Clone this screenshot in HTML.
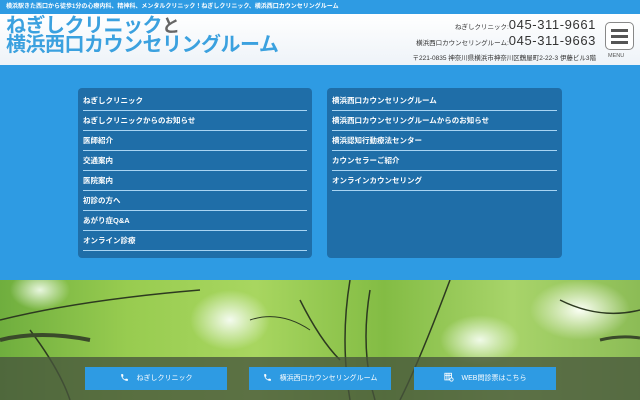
<!DOCTYPE html>
<html><head><meta charset="utf-8"><style>
*{margin:0;padding:0;box-sizing:border-box}
body{width:640px;height:400px;overflow:hidden;background:#2e9be3;font-family:"Liberation Sans","Noto Sans CJK JP",sans-serif;position:relative}
.top{position:absolute;left:0;top:0;width:640px;height:14px;background:#2e9be3;color:#fff;font-size:6px;font-weight:bold;line-height:14px;padding-left:6px;white-space:nowrap}
.hd{position:absolute;left:0;top:14px;width:640px;height:51px;background:linear-gradient(#fff,#eef3f8)}
.logo{position:absolute;left:6px;top:3px;font-size:20px;font-weight:bold;color:#3ba1df;line-height:19px;letter-spacing:-0.5px}
.logo span{color:#666;font-size:18px}
.tel{position:absolute;right:44px;top:4px;text-align:right;color:#333;white-space:nowrap}
.tel div{font-size:6.5px;line-height:13px}
.tel b{font-size:13px;font-weight:normal;letter-spacing:0.6px}
.addr{font-size:6.5px;margin-top:2px}
.menu{position:absolute;left:605px;width:29px;height:28px;border:1.5px solid #888;border-radius:5px;background:#fff}
.menu i{position:absolute;left:5px;width:17px;height:2.5px;background:#555}
.mt{position:absolute;left:608px;font-size:5.5px;color:#555}
.panel{position:absolute;top:88px;height:170px;background:#1f6ea8;border-radius:4px;padding:3px 5px}
.panel a{display:block;color:#fff;font-size:7.5px;font-weight:bold;height:20px;line-height:20px;border-bottom:1px solid #a8d4f2;text-decoration:none}
.photo{position:absolute;left:0;top:280px;width:640px;height:120px;background:
radial-gradient(ellipse 40px 30px at 230px 40px,#f4fbef,transparent),
radial-gradient(ellipse 50px 30px at 580px 30px,#fbfff5,transparent),
radial-gradient(ellipse 40px 25px at 480px 60px,#f0fae8,transparent),
radial-gradient(ellipse 30px 20px at 40px 10px,#e8f6df,transparent),
linear-gradient(90deg,#6fae3e,#98cc50 20%,#a8d660 40%,#83bc44 60%,#a8d46a 80%,#8cbc56);overflow:hidden}
.band{position:absolute;left:0;top:357px;width:640px;height:43px;background:rgba(70,85,60,0.78)}
.btn{position:absolute;top:367px;width:142px;height:23px;background:#2e9be3;color:#fff;font-size:7px;line-height:23px;text-align:center}
.btn svg{vertical-align:middle;margin-right:8px;margin-top:-2px}
</style></head><body>
<div class="top">横浜駅きた西口から徒歩1分の心療内科、精神科、メンタルクリニック！ねぎしクリニック、横浜西口カウンセリングルーム</div>
<div class="hd">
<div class="logo">ねぎしクリニック<span>と</span><br>横浜西口カウンセリングルーム</div>
<div class="tel"><div>ねぎしクリニック:<b>045-311-9661</b></div><div>横浜西口カウンセリングルーム:<b>045-311-9663</b></div><div class="addr">〒221-0835 神奈川県横浜市神奈川区鶴屋町2-22-3 伊藤ビル3階</div></div>
<div class="menu" style="top:8px"><i style="top:6px"></i><i style="top:12px"></i><i style="top:18px"></i></div>
<div class="mt" style="top:39px">MENU</div>
</div>
<div class="panel" style="left:78px;width:234px">
<a>ねぎしクリニック</a><a>ねぎしクリニックからのお知らせ</a><a>医師紹介</a><a>交通案内</a><a>医院案内</a><a>初診の方へ</a><a>あがり症Q&amp;A</a><a>オンライン診療</a></div>
<div class="panel" style="left:327px;width:235px">
<a>横浜西口カウンセリングルーム</a><a>横浜西口カウンセリングルームからのお知らせ</a><a>横浜認知行動療法センター</a><a>カウンセラーご紹介</a><a>オンラインカウンセリング</a></div>
<div class="photo"><svg width="640" height="120" style="position:absolute;left:0;top:0" stroke="#2d3a20" fill="none" stroke-width="1.5"><path d="M0 40 Q80 20 200 10"/><path d="M30 50 Q60 90 70 120"/><path d="M350 0 Q340 60 350 120"/><path d="M370 10 Q360 70 375 120"/><path d="M450 0 Q420 80 400 120"/><path d="M300 20 Q320 60 340 80"/><path d="M560 20 Q600 40 640 30"/><path d="M0 60 Q40 50 90 60" stroke-width="4" stroke="#3a4a2a"/><path d="M250 40 Q280 30 310 50" stroke-width="1"/><path d="M600 60 Q620 55 640 58" stroke-width="3" stroke="#3a4a2a"/></svg></div>
<div class="band"></div>
<div class="btn" style="left:85px"><svg width="9" height="9" viewBox="0 0 24 24"><path fill="#fff" d="M6.6 10.8c1.4 2.8 3.8 5.1 6.6 6.6l2.2-2.2c.3-.3.7-.4 1-.2 1.1.4 2.3.6 3.6.6.6 0 1 .4 1 1V20c0 .6-.4 1-1 1C10.6 21 3 13.4 3 4c0-.6.4-1 1-1h3.5c.6 0 1 .4 1 1 0 1.3.2 2.5.6 3.6.1.3 0 .7-.2 1z"/></svg>ねぎしクリニック</div>
<div class="btn" style="left:249px"><svg width="9" height="9" viewBox="0 0 24 24"><path fill="#fff" d="M6.6 10.8c1.4 2.8 3.8 5.1 6.6 6.6l2.2-2.2c.3-.3.7-.4 1-.2 1.1.4 2.3.6 3.6.6.6 0 1 .4 1 1V20c0 .6-.4 1-1 1C10.6 21 3 13.4 3 4c0-.6.4-1 1-1h3.5c.6 0 1 .4 1 1 0 1.3.2 2.5.6 3.6.1.3 0 .7-.2 1z"/></svg>横浜西口カウンセリングルーム</div>
<div class="btn" style="left:414px"><svg width="10" height="10" viewBox="0 0 24 24" fill="none" stroke="#fff" stroke-width="2"><rect x="2" y="3" width="16" height="16"/><path d="M2 8h16M7 3v16M12 3v16"/><circle cx="18" cy="18" r="4" fill="#2e9be3"/></svg>WEB問診票はこちら</div>
</body></html>
